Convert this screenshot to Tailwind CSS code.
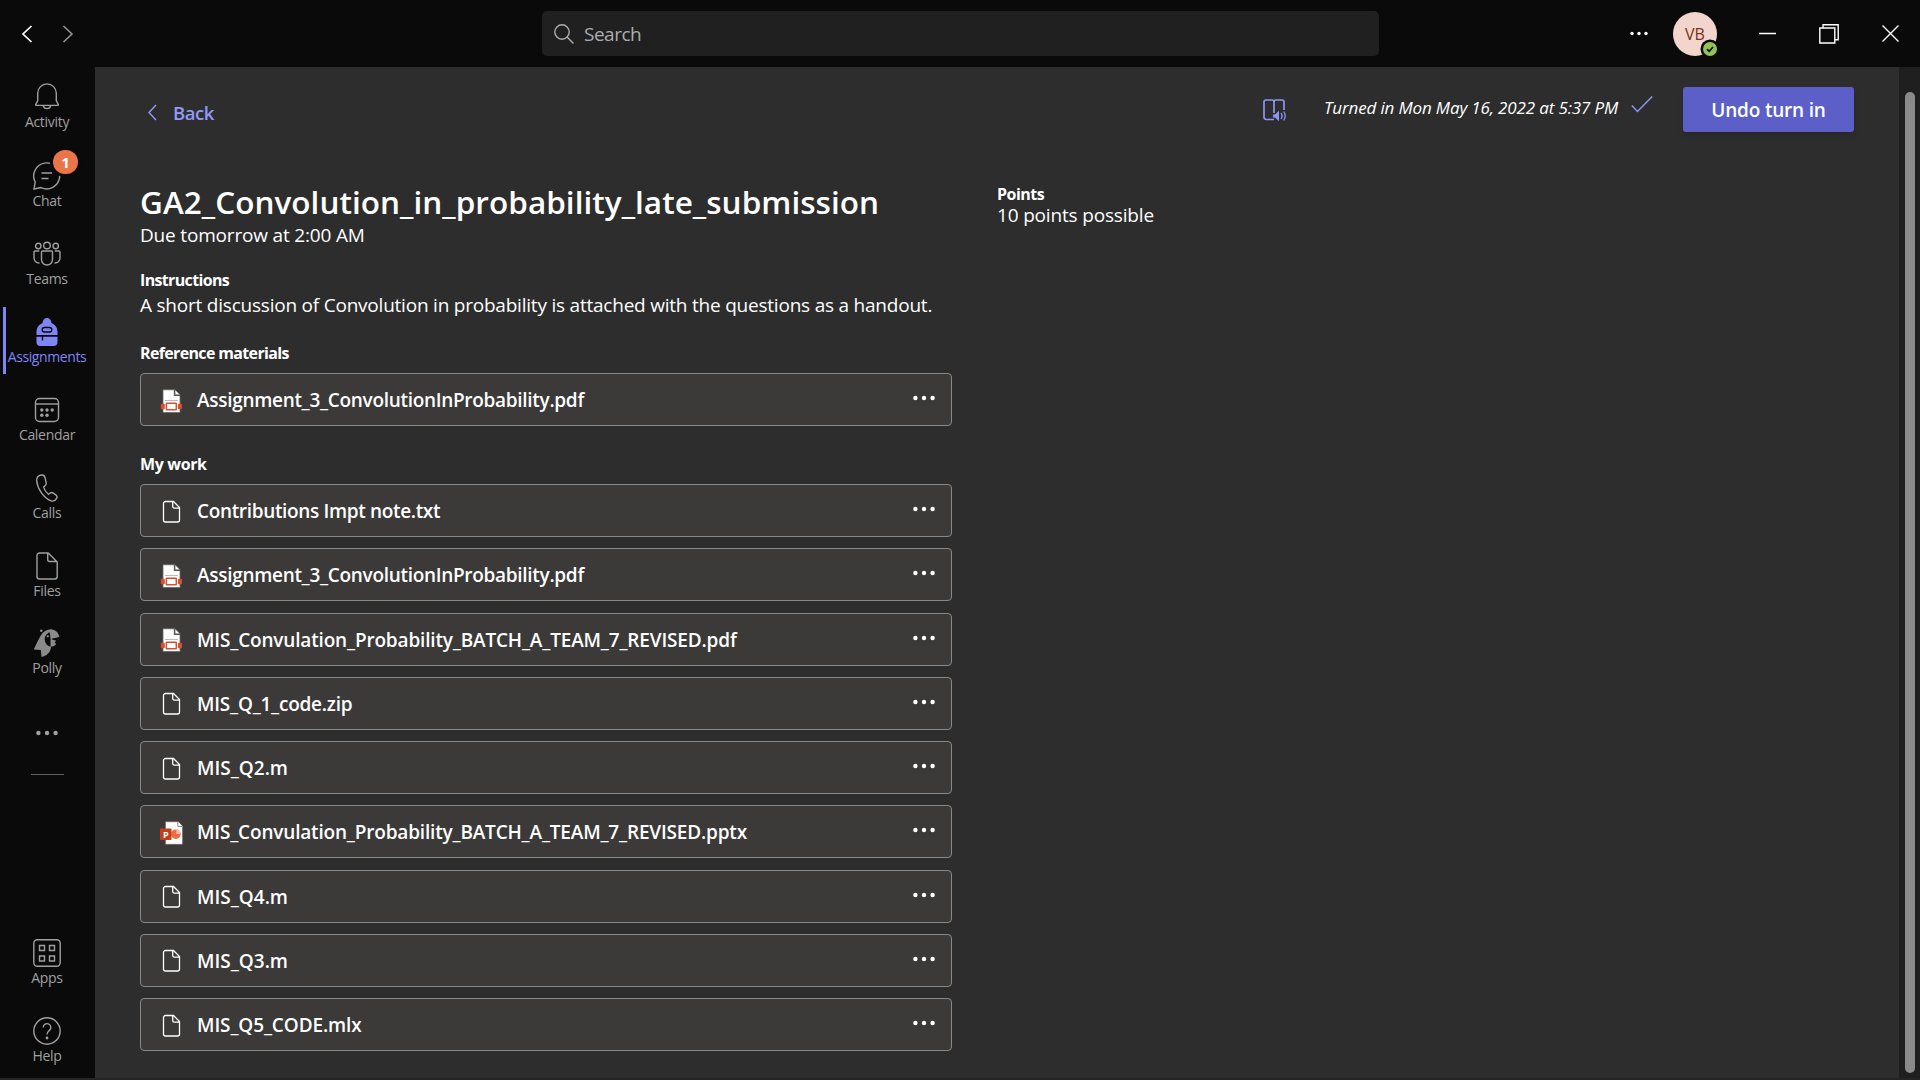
<!DOCTYPE html>
<html lang="en"><head><meta charset="utf-8"><title>Assignments</title>
<script src="https://cdn.jsdelivr.net/npm/@tailwindcss/browser@4"></script></head>
<body class="w-[1920px] h-[1080px] overflow-hidden bg-[#0a0a0a] text-white font-['Open_Sans',sans-serif]">
<svg class="hidden">
<symbol id="doc" viewBox="0 0 24 24"><path d="M5.500 1.500h8l6 6v12.500a2 2 0 0 1-2 2h-12a2 2 0 0 1-2-2V3.500a2 2 0 0 1 2-2zM12.700 1.500v5a1.700 1.700 0 0 0 1.700 1.700h5" fill="none" stroke="#fff" stroke-width="1.300"/></symbol>
<symbol id="pdf" viewBox="0 0 24 24"><path d="M3 .8h12l5 5v17.700H3z" fill="#fff" stroke="#686764" stroke-width=".8"/><path d="M14.600 .8v5.500h5.400" fill="#fff" stroke="#555" stroke-width="1.500"/><path d="M5 11.500h13" stroke="#bbb" stroke-width="1"/><rect x=".8" y="14.700" width="4" height="5.500" rx="1" fill="#d4502e"/><rect x="18" y="14.700" width="4" height="5.500" rx="1" fill="#d4502e"/><rect x="6.300" y="14.200" width="10" height="6.500" rx=".5" fill="#fff" stroke="#d9502c" stroke-width="1.500"/></symbol>
<symbol id="ppt" viewBox="0 0 24 24"><path d="M5.500 .8h13l4 4.500v18H5.500z" fill="#fff" stroke="#686764" stroke-width=".6"/><path d="M17.800 .8V5.500h4.700" fill="#fff" stroke="#888" stroke-width="1"/><circle cx="15.800" cy="13.200" r="4.800" fill="#ed6c47"/><path d="M16.300 13V8.300a4.700 4.700 0 0 1 4.700 4.700z" fill="#ffb8a0"/><rect x="0" y="7.500" width="11.500" height="11.500" rx="1" fill="#c43e1c"/><text x="3" y="16.700" font-size="9" font-weight="700" fill="#fff">P</text></symbol>
<symbol id="dots" viewBox="0 0 24 6"><circle cx="3.400" cy="3" r="2.200"/><circle cx="12" cy="3" r="2.200"/><circle cx="20.600" cy="3" r="2.200"/></symbol>
</svg>

<header class="h-[67px] flex items-center">
<div class="w-[542px] flex items-center pl-[21px] gap-[29px]">
<svg class="w-3 h-5" viewBox="0 0 12 20" fill="none" stroke="#fff" stroke-width="1.700"><path d="M10.500 2L2 10l8.500 8"/></svg>
<svg class="w-3 h-5" viewBox="0 0 12 20" fill="none" stroke="#999" stroke-width="1.500"><path d="M1.500 2L10 10l-8.500 8"/></svg>
</div>
<div class="w-[837px] h-[45px] rounded-[5px] bg-[#202020] flex items-center pl-3 gap-[10px] text-[#adadad]">
<svg class="w-5 h-5" viewBox="0 0 20 20" fill="none" stroke="currentColor" stroke-width="1.400"><circle cx="8" cy="8" r="7.200"/><path d="M13 13l6.500 6.500"/></svg>
<span class="mt-px text-[19px] tracking-[-0.5px]">Search</span></div>
<svg class="w-5 h-[5px] ml-[250px]" viewBox="0 0 20 5" fill="#fff"><circle cx="3" cy="2.500" r="1.700"/><circle cx="10" cy="2.500" r="1.700"/><circle cx="17" cy="2.500" r="1.700"/></svg>
<div class="relative ml-6 w-11 h-11 rounded-full bg-[#f2d5cc] text-[#7a2f22] text-[16px] font-medium flex items-center justify-center">VB
<svg class="absolute left-[27px] top-[27px] w-5 h-5" viewBox="0 0 20 20"><circle cx="10" cy="10" r="9.500" fill="#0a0a0a"/><circle cx="10" cy="10" r="7" fill="#92c353"/><path d="M7 10.200l2.200 2.100L13 8" fill="none" stroke="#0a0a0a" stroke-width="1.700"/></svg></div>
<svg class="ml-[42px] w-[17px] h-5" viewBox="0 0 17 20"><path d="M0 9.500h17" stroke="#fff" stroke-width="1.500"/></svg>
<svg class="ml-[43px] w-5 h-5" viewBox="0 0 20 20" fill="none" stroke="#fff" stroke-width="1.400"><path d="M.8 4h15v15h-15zM4 4V.8h15.200v15H16"/></svg>
<svg class="ml-[43px] w-[17px] h-[17px]" viewBox="0 0 17 17" stroke="#fff" stroke-width="1.400"><path d="M.5.5l16 16M16.500.5l-16 16"/></svg>
</header>

<div class="flex h-[1011px]">
<nav class="w-[95px] pr-px shrink-0 flex flex-col text-[14px] leading-[22px] tracking-[-0.3px] text-[#a0a0a0] text-center">
<div class="h-[78px] pt-4 flex flex-col items-center"><svg class="w-7 h-7" viewBox="0 0 28 28" fill="none" stroke="currentColor" stroke-width="1.400"><path d="M3.200 22.400h21.600c.5 0 .7-.4.500-.8L23.300 17.500V10.200a9.300 9.300 0 0 0-18.600 0v7.300l-2 4.100c-.2.400 0 .8.500.8zM10.200 22.600a3.900 3.900 0 0 0 7.600 0"/></svg><span>Activity</span></div>
<div class="h-[78px] pt-[17px] flex flex-col items-center relative"><svg class="w-7 h-7" viewBox="0 0 28 28" fill="none" stroke="currentColor" stroke-width="1.400"><path d="M1 27l1.200-7A13 13 0 1 1 8 25.600zM8.500 11H19M8.500 16.500h7"/></svg><span>Chat</span><div class="absolute left-[53px] top-[5px] w-[25px] h-6 rounded-full bg-[#e97548] ring-3 ring-[#0a0a0a] text-white font-bold leading-6 text-[15px]">1</div></div>
<div class="h-[78px] pt-[17px] flex flex-col items-center"><svg class="w-7 h-7" viewBox="0 0 28 28" fill="none" stroke="currentColor" stroke-width="1.400"><circle cx="14" cy="5.500" r="3.300"/><circle cx="5.300" cy="6" r="2.700"/><circle cx="22.700" cy="6" r="2.700"/><path d="M9.500 11h9a1 1 0 0 1 1 1v7.500a5.500 5.500 0 0 1-11 0V12a1 1 0 0 1 1-1zM6.300 11H2a1 1 0 0 0-1 1v6a5 5 0 0 0 5.500 5M21.700 11H26a1 1 0 0 1 1 1v6a5 5 0 0 1-5.500 5"/></svg><span>Teams</span></div>
<div class="h-[78px] pt-[17px] flex flex-col items-center relative text-[#7f85f5]"><div class="absolute left-[3px] top-[6px] w-[3px] h-[67px] bg-[#7f85f5]"></div><svg class="w-7 h-7" viewBox="0 0 28 28" fill="currentColor"><path d="M3.500 17v-3c0-4.500 2.500-7.500 6-9C9.700 2 11.500 0 14 0s4.300 2 4.500 5c3.500 1.500 6 4.500 6 9v3zM3.500 18.800h21V24a4 4 0 0 1-4 4h-13a4 4 0 0 1-4-4z"/><rect x="9.200" y="9.500" width="9.600" height="4.500" rx="2.200" stroke="#0a0a0a" stroke-width="1.300"/><path d="M9.500 18v4.500" stroke="#0a0a0a" stroke-width="1.300"/></svg><span class="tracking-[-0.4px]">Assignments</span></div>
<div class="h-[78px] pt-[17px] flex flex-col items-center"><svg class="w-7 h-7" viewBox="0 0 28 28" fill="none" stroke="currentColor" stroke-width="1.400"><rect x="2.500" y="2.500" width="23" height="23" rx="4"/><path d="M2.500 8h23"/><g fill="currentColor" stroke="none"><circle cx="8.800" cy="14" r="1.700"/><circle cx="14" cy="14" r="1.700"/><circle cx="19.200" cy="14" r="1.700"/><circle cx="8.800" cy="19.200" r="1.700"/><circle cx="14" cy="19.200" r="1.700"/></g></svg><span>Calendar</span></div>
<div class="h-[78px] pt-[17px] flex flex-col items-center"><svg class="w-7 h-7" viewBox="0 0 28 28" fill="none" stroke="currentColor" stroke-width="1.400"><path d="M8.200 1C5.500 1.500 3.500 3.800 3.700 6.800c.7 8 7.300 17.600 14.300 20 2.500.8 4.500-.3 5.600-2.400.8-1.400.4-2.600-.8-3.500l-2.500-1.800c-1.200-.8-2.400-.7-3.500.2l-1.400 1c-2.200-1.800-4-4.600-4.800-7.200l1.500-1.300c1-.9 1.300-1.900 1-3.200l-1-4.800C11.700 1.700 10.300.7 8.200 1z"/></svg><span>Calls</span></div>
<div class="h-[78px] pt-[17px] flex flex-col items-center"><svg class="w-7 h-7" viewBox="0 0 28 28" fill="none" stroke="currentColor" stroke-width="1.400"><path d="M6.500 1h8.700l9 9v14.500a2.500 2.500 0 0 1-2.500 2.500H6.500A2.500 2.500 0 0 1 4 24.500v-21A2.500 2.500 0 0 1 6.500 1zM14.700 1v6.500a2 2 0 0 0 2 2h7.500"/></svg><span>Files</span></div>
<div class="h-[78px] pt-4 flex flex-col items-center"><svg class="w-7 h-7" viewBox="0 0 28 28" fill="#8a8a8a"><circle cx="8.300" cy="1.800" r="1.300"/><path d="M13 1.500C15 .6 17.500.3 19.500.8L18 18.500c-.6 4.800-4.500 8.700-9.500 9.500l-.7-7L.8 20.500C2.500 16.500 5.500 10.500 7.800 6.500 9 4.200 10.800 2.500 13 1.500z"/><path d="M18 3a7.500 7.500 0 0 0 0 14.800z" fill="#0a0a0a"/><circle cx="14.800" cy="7.300" r="1.100" fill="#999"/><path d="M16.500.8c5-1 8.800 2.200 9.800 7.200L17.500 10zM17.500 10l5.800 1.800-1.700 1.400 1.600 2.100c-1.500 1.700-3.500 2.500-5.700 2.500z"/></svg><span>Polly</span></div>
<div class="h-[84px] pt-[39px] flex flex-col items-center"><svg class="w-6 h-[6px] shrink-0" fill="currentColor"><use href="#dots"/></svg><div class="mt-[38px] w-[33px] h-px shrink-0 bg-[#616161]"></div></div>
<div class="mt-auto h-[78px] pt-[17px] flex flex-col items-center"><svg class="w-7 h-7" viewBox="0 0 28 28" fill="none" stroke="currentColor" stroke-width="1.400"><rect x=".8" y=".8" width="26.400" height="26.400" rx="3.500"/><path d="M6.500 6.500h5v5h-5zM16.500 6.500h5v5h-5zM6.500 17h5v5h-5zM16.500 17h5v5h-5z"/></svg><span>Apps</span></div>
<div class="h-[78px] pt-[17px] flex flex-col items-center"><svg class="w-7 h-7" viewBox="0 0 28 28" fill="none" stroke="currentColor" stroke-width="1.400"><circle cx="14" cy="14" r="13.200"/><path d="M10.200 10.500a3.800 3.800 0 1 1 6.600 2.500c-1.300 1.400-2.800 2.200-2.800 4.500"/><circle cx="14" cy="21" r=".7" fill="currentColor"/></svg><span>Help</span></div>
</nav>

<main class="w-[1804px] h-[1011px] bg-[#2d2d2d]">
<div class="h-[96px] flex pl-[53px] pr-[45px]">
<div class="flex h-6 mt-[33px] items-center text-[#9299f7]"><svg class="w-[10px] h-5" viewBox="0 0 10 20" fill="none" stroke="currentColor" stroke-width="1.400"><path d="M8 3L1 10.500 8 18"/></svg><span class="ml-[15px] mt-0.5 text-[18.500px] tracking-[-0.45px] font-semibold">Back</span></div>
<div class="ml-auto flex">
<svg class="w-6 h-6 mt-[31px] text-[#8f95f5]" viewBox="0 0 24 24" fill="none" stroke="currentColor" stroke-width="1.700"><path d="M12 21.500H4A2.500 2.500 0 0 1 2 19V4a2 2 0 0 1 2-2h6a2 2 0 0 1 2 2 2 2 0 0 1 2-2h6a2 2 0 0 1 2 2v8M12 4v11"/><path d="M11 16.500h2l4-3.700v10.500l-4-3.800h-2z" fill="currentColor" stroke="none"/><path d="M19 15a5 5 0 0 1 0 6M21.700 13.500a8 8 0 0 1 0 9" stroke-width="1.300"/></svg>
<span class="ml-[38px] mt-[29px] leading-6 text-[17px] tracking-[-0.15px] italic">Turned in Mon May 16, 2022 at 5:37 PM</span>
<svg class="ml-[13px] mt-[27px] w-[22px] h-[20px]" viewBox="0 0 22 20" fill="none" stroke="#8f95f5" stroke-width="1.500"><path d="M.8 11.500l5.700 6L21.200 2.500"/></svg>
<button class="ml-[30px] mt-5 pt-0.5 w-[171px] h-[45px] rounded-[3px] bg-[#5b5fc7] shadow-md text-[19px] tracking-[-0.2px] font-semibold">Undo turn in</button>
</div></div>
<div class="flex pl-[45px]">
<section class="w-[812px] mt-5 text-[19px] leading-[27px]">
<h1 class="h-[38px] overflow-hidden text-[31.500px] tracking-[0.03px] leading-[38px] font-semibold whitespace-nowrap">GA2_Convolution_in_probability_late_submission</h1>
<p class="pt-px tracking-[-0.18px]">Due tomorrow at 2:00 AM</p>
<h2 class="mt-[20px] text-[16px] tracking-[-0.65px] leading-[22px] font-bold">Instructions</h2>
<p class="pt-px whitespace-nowrap tracking-[-0.218px]">A short discussion of Convolution in probability is attached with the questions as a handout.</p>
<h2 class="mt-[23px] text-[16px] tracking-[-0.65px] leading-[22px] font-bold">Reference materials</h2>
<div class="mt-[9px] grid gap-[11.250px] font-semibold" id="reference"></div>
<h2 class="mt-[27px] text-[16px] tracking-[-0.35px] leading-[22px] font-bold">My work</h2>
<div class="mt-[9px] grid gap-[11.250px] font-semibold" id="work"></div>
</section>
<aside class="ml-[45px] mt-[21px] text-[19px] leading-[21px]"><h2 class="text-[16px] tracking-[-0.5px] font-bold">Points</h2><p class="tracking-[-0.17px]">10 points possible</p></aside>
</div>
</main>
<div class="w-[21px] bg-[#1f1f1f] pt-[25px] pl-[6px]"><div class="w-[10px] h-[981px] rounded-full bg-[#8a8a8a]"></div></div>
</div>
<div class="h-[2px] bg-[#242424]"></div>
<script>
const row = ([icon, name, tracking]) => `<div class="h-[53px] border border-[#8a8886] rounded-[4px] bg-[#3b3a38] flex items-center pl-[19px] pr-[15px]"><svg class="w-6 h-6 mt-0.5"><use href="#${icon}"/></svg><span class="ml-[13px] mt-0.5 whitespace-nowrap" style="letter-spacing:${tracking}px">${name}</span><svg class="ml-auto mb-[3px] w-6 h-[6px]" fill="#fff"><use href="#dots"/></svg></div>`;
document.getElementById('reference').innerHTML = row(['pdf', 'Assignment_3_ConvolutionInProbability.pdf', -.3]);
document.getElementById('work').innerHTML = [
['doc', 'Contributions Impt note.txt', -.34],
['pdf', 'Assignment_3_ConvolutionInProbability.pdf', -.3],
['pdf', 'MIS_Convulation_Probability_BATCH_A_TEAM_7_REVISED.pdf', -.17],
['doc', 'MIS_Q_1_code.zip', -.23],
['doc', 'MIS_Q2.m', 0],
['ppt', 'MIS_Convulation_Probability_BATCH_A_TEAM_7_REVISED.pptx', -.18],
['doc', 'MIS_Q4.m', 0],
['doc', 'MIS_Q3.m', 0],
['doc', 'MIS_Q5_CODE.mlx', -.12]].map(row).join('');
</script>
</body></html>
